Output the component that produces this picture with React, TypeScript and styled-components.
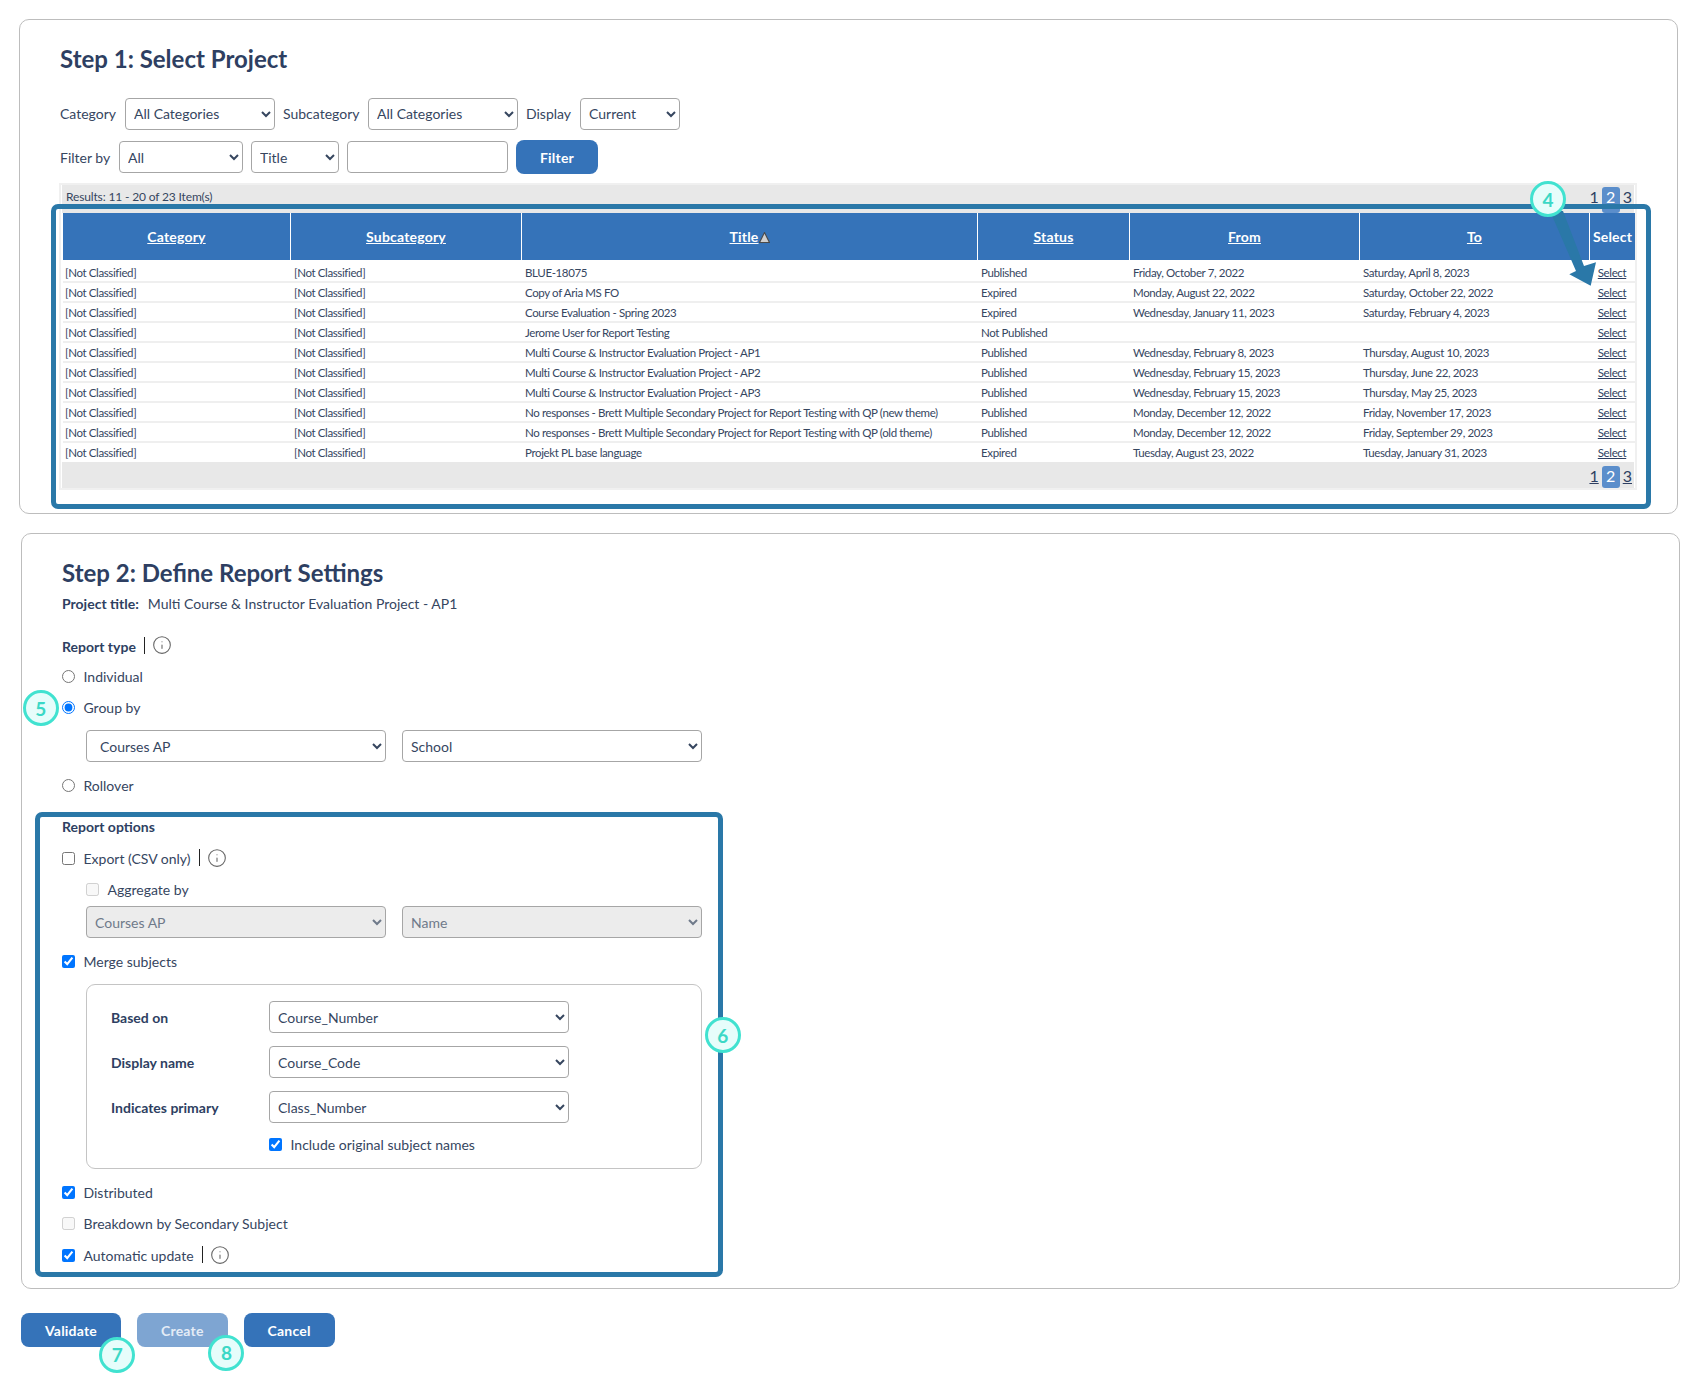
import React from "react";
import styled, { createGlobalStyle } from "styled-components";
import { Info } from "lucide-react";

const ink = "#2e3f62";
const text = "#36465f";
const brand = "#3573b9";
const callout = "#2a78a8";

const GlobalStyle = createGlobalStyle`
  html, body {
    margin: 0;
    padding: 0;
    background: #fff;
    font-family: "Lato", "Liberation Sans", sans-serif;
    font-size: 14px;
    color: ${text};
  }
`;

const Page = styled.div`
  position: relative;
  width: 1704px;
  height: 1384px;
  overflow: hidden;
  padding-top: 19px;
  box-sizing: border-box;
`;

const Panel = styled.section<{ $left: number; $top: number; $bottom: number }>`
  width: 1659px;
  box-sizing: border-box;
  margin-left: ${(p) => p.$left}px;
  padding: ${(p) => p.$top}px 40px ${(p) => p.$bottom}px;
  border: 1px solid #bdbdbd;
  border-radius: 10px;
`;

const SecondPanel = styled(Panel)`
  margin-top: 19px;
`;

const Heading = styled.h2`
  margin: 0;
  font-size: 24px;
  line-height: 30px;
  font-weight: 700;
  color: ${ink};
`;

const FilterRow = styled.div<{ $top: number; $height: number }>`
  display: flex;
  align-items: center;
  height: ${(p) => p.$height}px;
  gap: 8px;
  margin-top: ${(p) => p.$top}px;
`;

const FieldLabel = styled.span<{ $width: number }>`
  width: ${(p) => p.$width}px;
  white-space: nowrap;
`;

const Select = styled.select<{ $width: number; $inset?: boolean }>`
  width: ${(p) => p.$width}px;
  height: 32px;
  box-sizing: border-box;
  padding: 0 0 0 ${(p) => (p.$inset ? 9 : 4)}px;
  border: 1px solid #a6a6a6;
  border-radius: 4px;
  background-color: #fff;
  font-family: inherit;
  font-size: 14px;
  color: ${text};
  &:disabled {
    background-color: #ececec;
    color: #6f7a8a;
    opacity: 1;
  }
`;

const TextInput = styled.input`
  width: 161px;
  height: 32px;
  box-sizing: border-box;
  border: 1px solid #a6a6a6;
  border-radius: 4px;
`;

const Button = styled.button<{ $muted?: boolean }>`
  height: 34px;
  padding: 0 24px;
  border: 0;
  border-radius: 8px;
  background: ${(p) => (p.$muted ? "#7ea5d2" : brand)};
  color: ${(p) => (p.$muted ? "#e4ecf6" : "#fff")};
  font-family: inherit;
  font-size: 14px;
  font-weight: 700;
  letter-spacing: 0.2px;
`;

const TableFrame = styled.div`
  width: 1578px;
  height: 307px;
  box-sizing: border-box;
  margin: 9px 0 0 -1px;
  padding: 0 1px;
  border: 2px solid #f0f0f0;
  font-size: 11.5px;
  color: ${text};
`;

const Bar = styled.div<{ $height: number; $inset: number }>`
  display: flex;
  justify-content: space-between;
  height: ${(p) => p.$height}px;
  box-sizing: border-box;
  padding: ${(p) => p.$inset}px 2px 0 4px;
  background: #e8e8e8;
`;

const Results = styled.span`
  font-size: 12px;
  letter-spacing: -0.15px;
  line-height: 20px;
`;

const Pager = styled.div`
  display: flex;
  gap: 3px;
  margin-left: auto;
  font-size: 16px;
  line-height: 19px;
  color: ${ink};
`;

const PageLink = styled.a<{ $current?: boolean }>`
  min-width: 9px;
  text-align: center;
  text-decoration: ${(p) => (p.$current ? "none" : "underline")};
  ${(p) =>
    p.$current &&
    `
    width: 18px;
    border-radius: 3px;
    background: #5b8ecb;
    color: #fff;
  `}
`;

const Table = styled.table`
  width: 1572px;
  margin-left: 1px;
  table-layout: fixed;
  border-collapse: separate;
  border-spacing: 0;
`;

const HeadCell = styled.th<{ $width: number }>`
  width: ${(p) => p.$width}px;
  height: 47px;
  padding: 0;
  box-sizing: border-box;
  border-left: 1px solid #fff;
  background: ${brand};
  color: #fff;
  font-size: 14px;
  font-weight: 700;
  letter-spacing: 0.2px;
  text-align: center;
  &:first-child {
    border-left: 0;
  }
  a {
    text-decoration: underline;
  }
`;

const SortMark = styled.svg`
  vertical-align: -1px;
`;

const Row = styled.tr`
  height: 20px;
  &:first-child {
    height: 23px;
  }
  &:first-child td {
    padding-top: 5px;
  }
  &:last-child {
    height: 19px;
  }
  &:last-child td {
    border-bottom: 0;
    padding-top: 1px;
  }
`;

const Cell = styled.td<{ $flush?: boolean }>`
  padding: 2px 0 0 ${(p) => (p.$flush ? 2 : 4)}px;
  box-sizing: border-box;
  border-bottom: 2px solid #efefef;
  white-space: nowrap;
  line-height: 16px;
  letter-spacing: -0.37px;
`;

const SelectCell = styled(Cell)`
  padding-left: 0;
  text-align: center;
  color: ${ink};
  text-decoration: underline;
`;

const Meta = styled.div`
  display: flex;
  gap: 9px;
  margin-top: 6px;
  line-height: 20px;
`;

const Strong = styled.strong`
  font-weight: 700;
  color: ${ink};
`;

const HelpRow = styled.div`
  display: flex;
  align-items: center;
  height: 22px;
  margin: 21px 0 4px;
`;

const Separator = styled.span`
  width: 1.5px;
  height: 17px;
  margin: -2px 7px 0 8px;
  background: #222;
`;

const HelpIcon = styled(Info)`
  margin-top: -2px;
  color: #666;
`;

const Choice = styled.label<{ $indent?: boolean }>`
  display: flex;
  align-items: center;
  height: 31px;
  margin-left: ${(p) => (p.$indent ? 24 : 0)}px;
  input {
    margin: 0 8.5px 0 0;
    width: 13px;
    height: 13px;
    flex: none;
  }
`;

const SelectPair = styled.div<{ $top: number }>`
  display: flex;
  gap: 16px;
  margin: ${(p) => p.$top}px 0 0 24px;
`;

const OptionsTitle = styled.div`
  margin-top: 16px;
  height: 20px;
  line-height: 20px;
  font-weight: 700;
  color: ${ink};
`;

const OptionRow = styled(Choice)<{ $top?: number }>`
  margin-top: ${(p) => p.$top ?? 0}px;
`;

const MergeBox = styled.div`
  display: grid;
  grid-template-columns: 158px 300px;
  grid-auto-rows: 32px;
  row-gap: 13px;
  align-items: center;
  width: 616px;
  height: 185px;
  box-sizing: border-box;
  margin: 7px 0 0 24px;
  padding: 16px 24px;
  border: 1px solid #c4c4c4;
  border-radius: 9px;
`;

const MergeLabel = styled.span`
  font-weight: 700;
  color: ${ink};
`;

const IncludeRow = styled(Choice)`
  grid-column: 2;
  height: 20px;
  margin-top: -16px;
`;

const Actions = styled.div`
  display: flex;
  gap: 16px;
  margin: 24px 0 0 21px;
`;

const Callout = styled.div<{ $x: number; $y: number; $w: number; $h: number }>`
  position: absolute;
  left: ${(p) => p.$x}px;
  top: ${(p) => p.$y}px;
  width: ${(p) => p.$w}px;
  height: ${(p) => p.$h}px;
  box-sizing: border-box;
  border: 5px solid ${callout};
  border-radius: 7px;
  pointer-events: none;
`;

const Marker = styled.div<{ $x: number; $y: number }>`
  position: absolute;
  left: ${(p) => p.$x - 18}px;
  top: ${(p) => p.$y - 18}px;
  width: 36px;
  height: 36px;
  box-sizing: border-box;
  display: flex;
  align-items: center;
  justify-content: center;
  border: 3.5px solid #41e2d0;
  border-radius: 50%;
  background: #e6fdfb;
  color: #3bd8c6;
  font-size: 19px;
  font-weight: 700;
`;

const Arrow = styled.svg`
  position: absolute;
  left: 1540px;
  top: 205px;
`;

const rows = [
  ["BLUE-18075", "Published", "Friday, October 7, 2022", "Saturday, April 8, 2023"],
  ["Copy of Aria MS FO", "Expired", "Monday, August 22, 2022", "Saturday, October 22, 2022"],
  ["Course Evaluation - Spring 2023", "Expired", "Wednesday, January 11, 2023", "Saturday, February 4, 2023"],
  ["Jerome User for Report Testing", "Not Published", "", ""],
  ["Multi Course & Instructor Evaluation Project - AP1", "Published", "Wednesday, February 8, 2023", "Thursday, August 10, 2023"],
  ["Multi Course & Instructor Evaluation Project - AP2", "Published", "Wednesday, February 15, 2023", "Thursday, June 22, 2023"],
  ["Multi Course & Instructor Evaluation Project - AP3", "Published", "Wednesday, February 15, 2023", "Thursday, May 25, 2023"],
  ["No responses - Brett Multiple Secondary Project for Report Testing with QP (new theme)", "Published", "Monday, December 12, 2022", "Friday, November 17, 2023"],
  ["No responses - Brett Multiple Secondary Project for Report Testing with QP (old theme)", "Published", "Monday, December 12, 2022", "Friday, September 29, 2023"],
  ["Projekt PL base language", "Expired", "Tuesday, August 23, 2022", "Tuesday, January 31, 2023"],
];

const columns = [
  { label: "Category", width: 227 },
  { label: "Subcategory", width: 231 },
  { label: "Title", width: 456 },
  { label: "Status", width: 152 },
  { label: "From", width: 230 },
  { label: "To", width: 230 },
];

const PagerLinks = () => (
  <Pager>
    <PageLink>1</PageLink>
    <PageLink $current>2</PageLink>
    <PageLink>3</PageLink>
  </Pager>
);

const Help = () => (
  <>
    <Separator />
    <HelpIcon size={20} strokeWidth={1.3} />
  </>
);

const Dropdown = ({ width, value, inset, disabled }: { width: number; value: string; inset?: boolean; disabled?: boolean }) => (
  <Select $width={width} $inset={inset} disabled={disabled} defaultValue={value}>
    <option>{value}</option>
  </Select>
);

const SelectProject = () => (
  <Panel $left={19} $top={24} $bottom={23}>
    <Heading>Step 1: Select Project</Heading>
    <FilterRow $top={23} $height={33}>
      <FieldLabel $width={57}>Category</FieldLabel>
      <Dropdown width={150} value="All Categories" />
      <FieldLabel $width={77}>Subcategory</FieldLabel>
      <Dropdown width={150} value="All Categories" />
      <FieldLabel $width={46}>Display</FieldLabel>
      <Dropdown width={100} value="Current" />
    </FilterRow>
    <FilterRow $top={10} $height={34}>
      <FieldLabel $width={51}>Filter by</FieldLabel>
      <Dropdown width={124} value="All" />
      <Dropdown width={88} value="Title" />
      <TextInput />
      <Button>Filter</Button>
    </FilterRow>
    <TableFrame>
      <Bar $height={28} $inset={2}>
        <Results>Results: 11 - 20 of 23 Item(s)</Results>
        <PagerLinks />
      </Bar>
      <Table>
        <thead>
          <tr>
            {columns.map((col) => (
              <HeadCell key={col.label} $width={col.width}>
                <a>{col.label}</a>
                {col.label === "Title" && (
                  <SortMark width="11" height="11" viewBox="0 0 10 10">
                    <path d="M5 .5 9.5 9.5H.5Z" fill="#cfcfcf" stroke="#4a4a4a" strokeWidth="1" />
                  </SortMark>
                )}
              </HeadCell>
            ))}
            <HeadCell $width={46}>Select</HeadCell>
          </tr>
        </thead>
        <tbody>
          {rows.map(([title, status, from, to]) => (
            <Row key={title}>
              <Cell $flush>[Not Classified]</Cell>
              <Cell>[Not Classified]</Cell>
              <Cell>{title}</Cell>
              <Cell>{status}</Cell>
              <Cell>{from}</Cell>
              <Cell>{to}</Cell>
              <SelectCell>Select</SelectCell>
            </Row>
          ))}
        </tbody>
      </Table>
      <Bar $height={26} $inset={4}>
        <PagerLinks />
      </Bar>
    </TableFrame>
  </Panel>
);

const ReportSettings = () => (
  <SecondPanel $left={21} $top={24} $bottom={17}>
    <Heading>Step 2: Define Report Settings</Heading>
    <Meta>
      <Strong>Project title:</Strong>
      Multi Course &amp; Instructor Evaluation Project - AP1
    </Meta>
    <HelpRow>
      <Strong>Report type</Strong>
      <Help />
    </HelpRow>
    <Choice>
      <input type="radio" name="reportType" />
      Individual
    </Choice>
    <Choice>
      <input type="radio" name="reportType" defaultChecked />
      Group by
    </Choice>
    <SelectPair $top={7}>
      <Dropdown width={300} value="Courses AP" inset />
      <Dropdown width={300} value="School" />
    </SelectPair>
    <OptionRow $top={8}>
      <input type="radio" name="reportType" />
      Rollover
    </OptionRow>
    <OptionsTitle>Report options</OptionsTitle>
    <OptionRow $top={6}>
      <input type="checkbox" />
      Export (CSV only)
      <Help />
    </OptionRow>
    <Choice $indent>
      <input type="checkbox" disabled />
      Aggregate by
    </Choice>
    <SelectPair $top={1}>
      <Dropdown width={300} value="Courses AP" disabled />
      <Dropdown width={300} value="Name" disabled />
    </SelectPair>
    <OptionRow $top={8}>
      <input type="checkbox" defaultChecked />
      Merge subjects
    </OptionRow>
    <MergeBox>
      <MergeLabel>Based on</MergeLabel>
      <Dropdown width={300} value="Course_Number" />
      <MergeLabel>Display name</MergeLabel>
      <Dropdown width={300} value="Course_Code" />
      <MergeLabel>Indicates primary</MergeLabel>
      <Dropdown width={300} value="Class_Number" />
      <IncludeRow>
        <input type="checkbox" defaultChecked />
        Include original subject names
      </IncludeRow>
    </MergeBox>
    <OptionRow $top={8}>
      <input type="checkbox" defaultChecked />
      Distributed
    </OptionRow>
    <Choice>
      <input type="checkbox" disabled />
      Breakdown by Secondary Subject
    </Choice>
    <OptionRow $top={1}>
      <input type="checkbox" defaultChecked />
      Automatic update
      <Help />
    </OptionRow>
  </SecondPanel>
);

const App = () => (
  <Page>
    <GlobalStyle />
    <SelectProject />
    <ReportSettings />
    <Actions>
      <Button>Validate</Button>
      <Button $muted>Create</Button>
      <Button>Cancel</Button>
    </Actions>
    <Callout $x={50.5} $y={204} $w={1600} $h={305} />
    <Callout $x={35} $y={812} $w={688} $h={465} />
    <Arrow width="60" height="85" viewBox="0 0 60 85">
      <path d="M10 6 23 6 44 61 56 57.3 50.7 80.7 29.3 69.3 36 66Z" fill={callout} />
    </Arrow>
    <Marker $x={1548} $y={199}>4</Marker>
    <Marker $x={40.7} $y={708.3}>5</Marker>
    <Marker $x={722.7} $y={1035.3}>6</Marker>
    <Marker $x={117.3} $y={1354.7}>7</Marker>
    <Marker $x={226.4} $y={1352.7}>8</Marker>
  </Page>
);

export default App;
